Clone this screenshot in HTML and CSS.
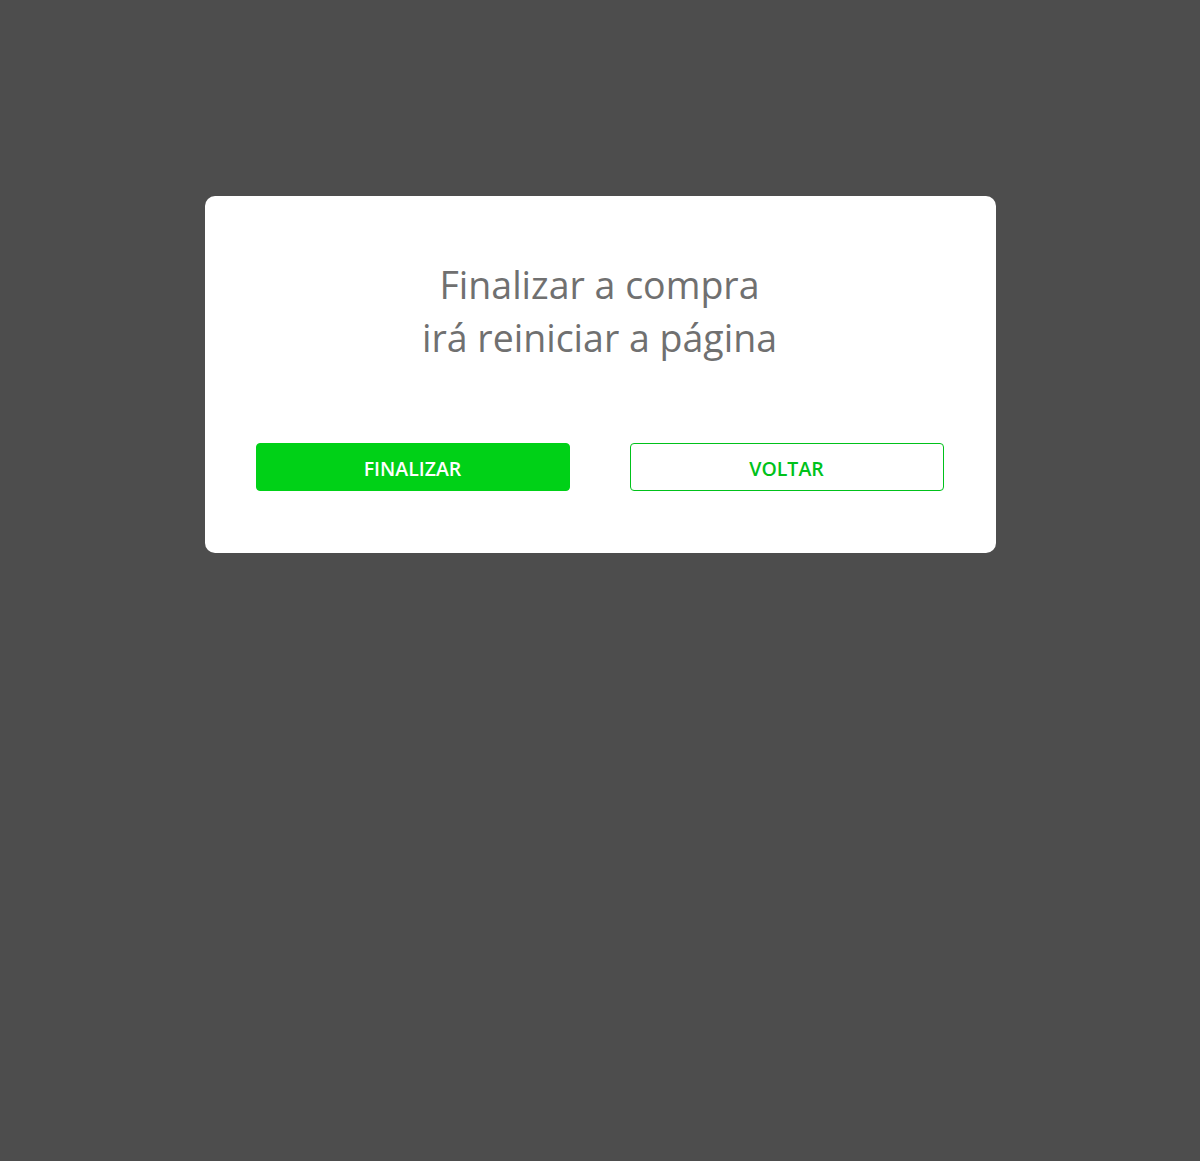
FILE: index.html
```html
<!DOCTYPE html>
<html lang="pt">
<head>
<meta charset="utf-8">
<link rel="stylesheet" href="styles.css">
</head>
<body>
<div class="overlay">
  <div class="modal">
    <h1 class="title">Finalizar a compra<br>irá reiniciar a página</h1>
    <div class="actions">
      <button class="btn btn-primary">FINALIZAR</button>
      <button class="btn btn-outline">VOLTAR</button>
    </div>
  </div>
</div>
</body>
</html>
```

FILE: styles.css
```css
html, body {
  margin: 0;
  padding: 0;
  height: 100%;
}
body {
  background: #4d4d4d;
  font-family: "Open Sans", "Noto Sans", sans-serif;
}
.overlay {
  display: flex;
  justify-content: center;
  padding-top: 196px;
}
.modal {
  width: 791px;
  box-sizing: border-box;
  background: #ffffff;
  border-radius: 10px;
  padding: 62px 52px 62px 51px;
}
.title {
  margin: 0;
  text-align: center;
  font-weight: 400;
  font-size: 37.5px;
  line-height: 53px;
  color: #707070;
}
.actions {
  display: flex;
  gap: 60px;
  margin-top: 79px;
}
.btn {
  flex: 1;
  height: 48px;
  padding: 2px 0 0;
  border-radius: 4px;
  font-family: "Open Sans", "Noto Sans", sans-serif;
  font-size: 19.5px;
  font-weight: 600;
  cursor: pointer;
  box-sizing: border-box;
}
.btn-primary {
  background: #00d117;
  border: 1px solid #00d117;
  color: #ffffff;
}
.btn-outline {
  background: #ffffff;
  border: 1px solid #00c21a;
  color: #00c21a;
}
```
